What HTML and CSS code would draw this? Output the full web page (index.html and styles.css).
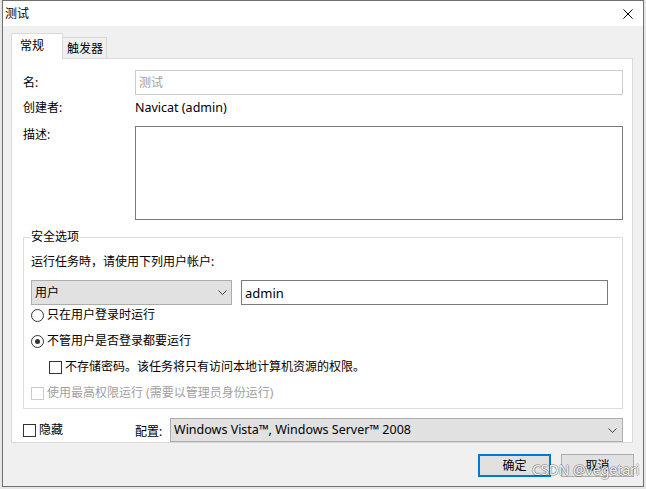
FILE: index.html
```html
<!DOCTYPE html>
<html lang="zh-CN">
<head>
    <meta charset="UTF-8">
    <title>测试</title>
    <link rel="stylesheet" href="styles.css">
</head>
<body>
    <div class="window">
        <div class="titlebar">
            <span class="title">测试</span>
            <svg class="close" width="10" height="10" viewBox="0 0 10 10">
                <path d="M0.5 0.5 L9.5 9.5 M9.5 0.5 L0.5 9.5" stroke="#000" stroke-width="1" fill="none"/>
            </svg>
        </div>
        <div class="client">
            <div class="tabs">
                <div class="tab active">常规</div>
                <div class="tab">触发器</div>
            </div>
            <div class="panel">
                <div class="field-row">
                    <label class="lbl" for="name">名:</label>
                    <input class="text light" id="name" placeholder="测试">
                </div>
                <div class="field-row creator">
                    <span class="lbl">创建者:</span>
                    <span class="value">Navicat (admin)</span>
                </div>
                <div class="field-row top desc-row">
                    <label class="lbl desc-lbl" for="desc">描述:</label>
                    <textarea class="desc" id="desc"></textarea>
                </div>

                <fieldset class="group">
                    <legend>安全选项</legend>
                    <div class="hint">运行任务時，请使用下列用户帐户:</div>
                    <div class="account-row">
                        <div class="select user-type">
                            <span>用户</span>
                            <svg width="9" height="5" viewBox="0 0 9 5"><polyline points="0.5,0.5 4.5,4.5 8.5,0.5" stroke="#444" fill="none"/></svg>
                        </div>
                        <input class="text dark account" value="admin">
                    </div>
                    <div class="opt first"><span class="radio"></span>只在用户登录时运行</div>
                    <div class="opt"><span class="radio checked"></span>不管用户是否登录都要运行</div>
                    <div class="opt indent"><span class="check"></span>不存储密码。该任务将只有访问本地计算机资源的权限。</div>
                    <div class="opt disabled"><span class="check"></span>使用最高权限运行 (需要以管理员身份运行)</div>
                </fieldset>

                <div class="bottom-row">
                    <div class="hide-opt"><span class="check"></span>隐藏</div>
                    <span class="cfg-lbl">配置:</span>
                    <div class="select config">
                        <span>Windows Vista™, Windows Server™ 2008</span>
                        <svg width="9" height="5" viewBox="0 0 9 5"><polyline points="0.5,0.5 4.5,4.5 8.5,0.5" stroke="#444" fill="none"/></svg>
                    </div>
                </div>
            </div>
            <div class="buttons">
                <button class="btn default">确定</button>
                <button class="btn">取消</button>
            </div>
        </div>
        <div class="watermark">CSDN @vegetari</div>
    </div>
</body>
</html>
```

FILE: styles.css
```css
* {
    box-sizing: border-box;
}
body {
    margin: 0;
    background: #e6e6e6;
    font-family: "Noto Sans", "Noto Sans CJK SC", sans-serif;
    font-size: 12px;
    line-height: 16px;
    color: #000;
}
.window {
    position: relative;
    width: 642px;
    height: 487px;
    margin-left: 2px;
    border: 1px solid #707070;
    background: #f0f0f0;
}
.titlebar {
    height: 25px;
    background: #fff;
    display: flex;
    align-items: center;
    justify-content: space-between;
    padding: 0 10px 0 2px;
}
.client {
    display: flex;
    flex-direction: column;
}
.tabs {
    position: relative;
    z-index: 1;
    display: flex;
    align-items: flex-end;
    height: 26px;
    margin-top: 7px;
    margin-bottom: -1px;
    padding-left: 8px;
}
.tab {
    height: 21px;
    margin-bottom: 1px;
    padding: 3px 3px 0 4px;
    border: 1px solid #d9d9d9;
    border-left: none;
    border-bottom: none;
    background: #f0f0f0;
}
.tab.active {
    height: 26px;
    margin-bottom: 0;
    padding: 4px 18px 0 8px;
    border-left: 1px solid #d9d9d9;
    background: #fff;
}
.panel {
    margin-left: 8px;
    width: 622px;
    height: 385px;
    background: #fff;
    border: 1px solid #d9d9d9;
    padding: 11px 9px 0 11px;
}
.field-row {
    display: flex;
    align-items: center;
}
.field-row.top {
    align-items: flex-start;
}
.lbl {
    width: 112px;
    flex: none;
}
.creator {
    margin-top: 5px;
}
.value {
    font-size: 12.5px;
}
.desc-row {
    margin-top: 10px;
}
.desc-lbl {
    padding-top: 1px;
}
input.text {
    flex: 1;
    height: 25px;
    padding: 0 3px;
    font: inherit;
    outline: none;
}
input.light {
    border: 1px solid #cccccc;
}
input.light::placeholder {
    color: #a0a0a0;
}
input.dark {
    border: 1px solid #7a7a7a;
}
textarea.desc {
    flex: 1;
    height: 94px;
    border: 1px solid #7a7a7a;
    resize: none;
    outline: none;
}
.group {
    margin: 9px 0 0;
    padding: 0 7px 7px;
    border: 1px solid #dcdcdc;
    min-width: 0;
}
.group legend {
    padding: 0;
    line-height: 16px;
}
.hint {
    margin-top: 9px;
}
.account-row {
    display: flex;
    gap: 9px;
    margin-top: 10px;
}
.select {
    display: flex;
    align-items: center;
    justify-content: space-between;
    background: #e1e1e1;
    border: 1px solid #adadad;
}
.select svg {
    flex: none;
}
.user-type {
    width: 201px;
    height: 25px;
    padding: 0 4px 0 3px;
}
input.account {
    flex: none;
    width: 367px;
    font-size: 13px;
}
.opt {
    display: flex;
    align-items: center;
    height: 16px;
    margin-top: 10px;
}
.opt.first {
    margin-top: 2px;
}
.opt.indent {
    padding-left: 18px;
}
.radio, .check {
    flex: none;
    width: 13px;
    height: 13px;
    margin-right: 3px;
    border: 1px solid #333;
    background: #fff;
}
.radio {
    border-radius: 50%;
    display: flex;
    align-items: center;
    justify-content: center;
}
.radio.checked::after {
    content: "";
    width: 5px;
    height: 5px;
    border-radius: 50%;
    background: #333;
}
.opt.disabled {
    color: #a0a0a0;
}
.opt.disabled .check {
    border-color: #cccccc;
}
.bottom-row {
    display: flex;
    align-items: center;
    height: 24px;
    margin-top: 9px;
}
.hide-opt {
    display: flex;
    align-items: center;
    width: 112px;
    flex: none;
}
.cfg-lbl {
    width: 35px;
    flex: none;
    padding-top: 4px;
}
.config {
    flex: 1;
    height: 24px;
    padding: 0 5px 0 3px;
    font-size: 12.5px;
}
.buttons {
    display: flex;
    justify-content: flex-end;
    gap: 10px;
    margin-top: 11px;
    padding-right: 9px;
}
.btn {
    width: 73px;
    height: 23px;
    background: #e1e1e1;
    border: 1px solid #adadad;
    font: inherit;
    padding: 0;
}
.btn.default {
    border: 2px solid #0078d7;
}
.watermark {
    position: absolute;
    left: 529px;
    top: 461px;
    font-size: 14px;
    color: rgba(255, 255, 255, 0.9);
    text-shadow: 1px 0 0 rgba(0, 0, 0, 0.25), -1px 0 0 rgba(0, 0, 0, 0.25), 0 1px 0 rgba(0, 0, 0, 0.25), 0 -1px 0 rgba(0, 0, 0, 0.25);
}
```
